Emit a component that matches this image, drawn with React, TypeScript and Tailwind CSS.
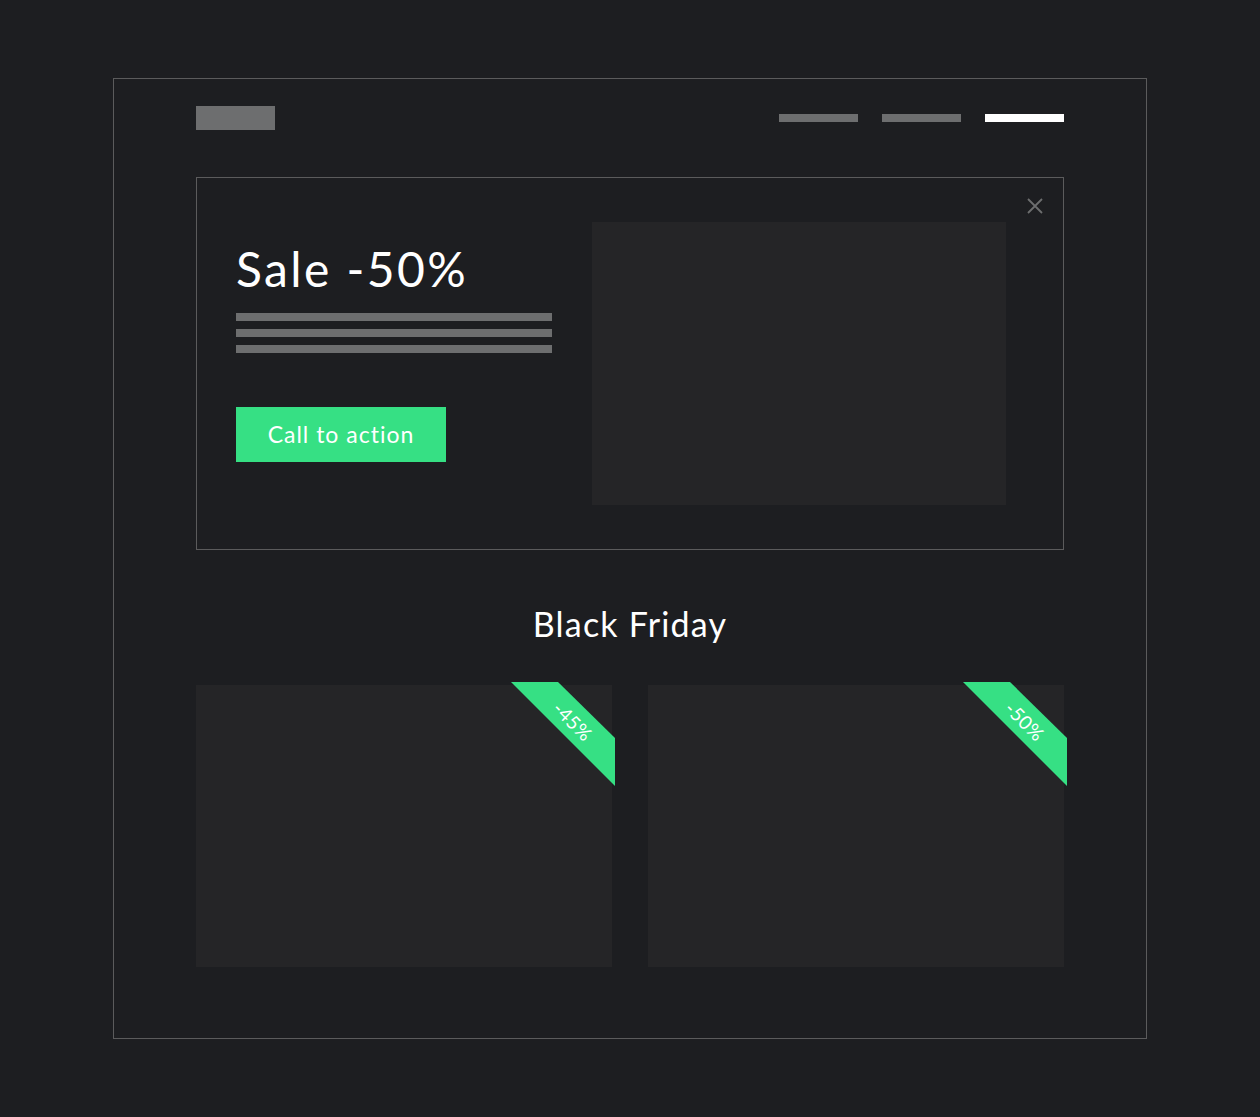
type Deal = {
  id: string;
  discount: string;
};

const deals: Deal[] = [
  { id: "left", discount: "-45%" },
  { id: "right", discount: "-50%" },
];

const fontStyle = "font-['Lato','Noto_Sans',sans-serif]";

function Ribbon({ label }: { label: string }) {
  return (
    <div className="pointer-events-none absolute -right-[3px] -top-[3px] h-[104px] w-[104px]">
      <div className="absolute inset-0 bg-[#36e084] [clip-path:polygon(0_0,47px_0,100%_56px,100%_100%)]" />
      <span
        className={`absolute left-[62px] top-[39px] -translate-x-1/2 -translate-y-1/2 rotate-45 whitespace-nowrap text-[19px] leading-none tracking-[0.5px] text-white ${fontStyle}`}
      >
        {label}
      </span>
    </div>
  );
}

export default function App() {
  return (
    <div className={`min-h-screen bg-[#1d1e21] pt-[78px] pb-[78px] ${fontStyle}`}>
      <div className="mx-auto h-[961px] w-[1034px] border border-[#5b5b5c] px-[82px] pt-[27px]">
        <header className="flex items-start justify-between">
          <div className="h-[24px] w-[79px] bg-[#6d6e6f]" />
          <nav className="mt-[8px] flex gap-[24px]">
            <span className="h-[8px] w-[79px] bg-[#6d6e6f]" />
            <span className="h-[8px] w-[79px] bg-[#6d6e6f]" />
            <span className="h-[8px] w-[79px] bg-white" />
          </nav>
        </header>

        <section className="relative mt-[47px] flex h-[373px] justify-between border border-[#5b5b5c] pl-[39px] pr-[57px] pt-[44px]">
          <button
            type="button"
            aria-label="Close"
            className="absolute right-[20px] top-[20px] text-[#6d6e6f]"
          >
            <svg
              viewBox="0 0 16 16"
              fill="none"
              stroke="currentColor"
              strokeWidth="1.8"
              aria-hidden="true"
              className="h-[16px] w-[16px]"
            >
              <path d="M1 1l14 14M15 1L1 15" />
            </svg>
          </button>

          <div className="w-[316px]">
            <h1 className="mt-[23px] text-[48px] leading-none font-normal tracking-[2.4px] text-white">
              Sale -50%
            </h1>
            <div className="mt-[20px] flex flex-col gap-[8px]">
              <span className="h-[8px] w-full bg-[#6d6e6f]" />
              <span className="h-[8px] w-full bg-[#6d6e6f]" />
              <span className="h-[8px] w-full bg-[#6d6e6f]" />
            </div>
            <a
              href="#"
              className="mt-[54px] flex h-[55px] w-[210px] items-center justify-center bg-[#36e084] text-[23px] tracking-[1px] text-white"
            >
              Call to action
            </a>
          </div>

          <div className="h-[283px] w-[414px] bg-[#252527]" />
        </section>

        <h2 className="mt-[57px] text-center text-[34px] leading-none tracking-[1.2px] text-white">
          Black Friday
        </h2>

        <div className="mt-[44px] grid grid-cols-2 gap-[36px]">
          {deals.map((deal) => (
            <div key={deal.id} className="relative h-[282px] bg-[#252527]">
              <Ribbon label={deal.discount} />
            </div>
          ))}
        </div>
      </div>
    </div>
  );
}
